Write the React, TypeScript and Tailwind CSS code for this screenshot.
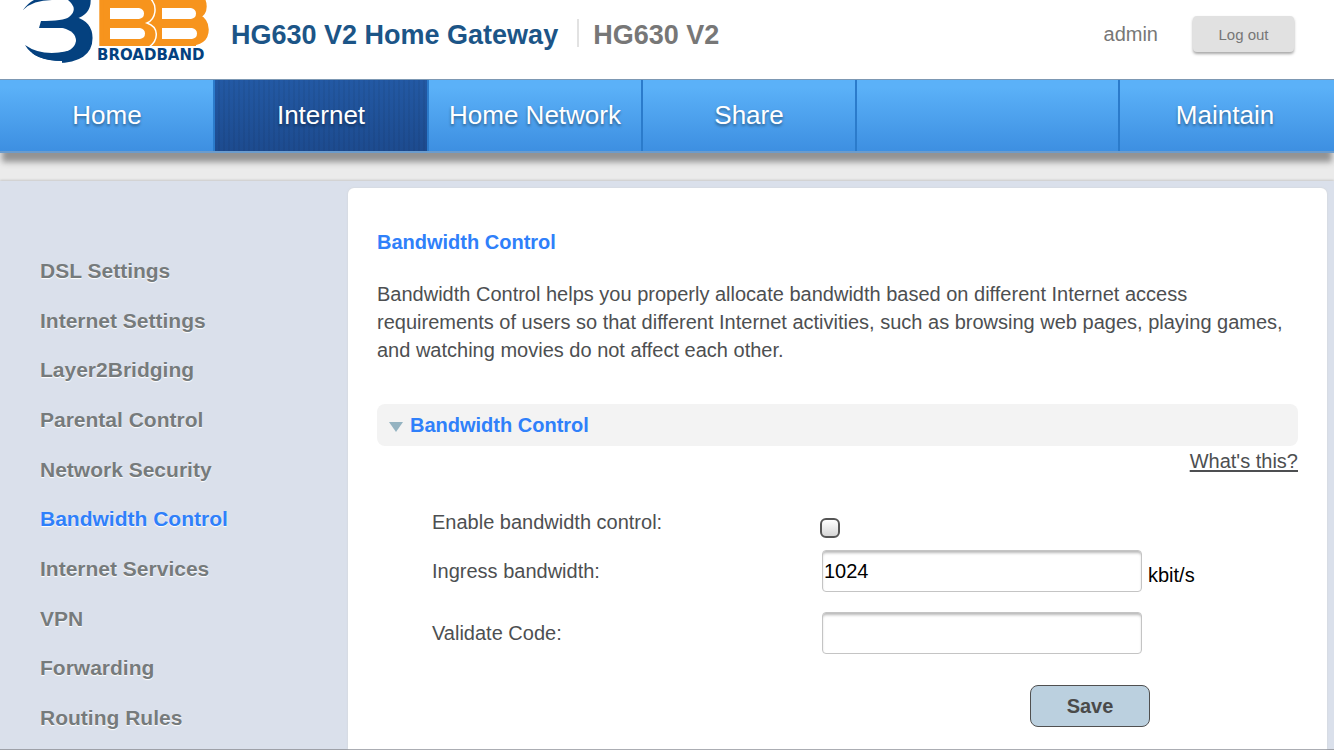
import { useState } from "react";

// ─── Constants ───────────────────────────────────────────────────────

const TABS = ["Home", "Internet", "Home Network", "Share"];

const MENU_ITEMS = [
  "DSL Settings",
  "Internet Settings",
  "Layer2Bridging",
  "Parental Control",
  "Network Security",
  "Bandwidth Control",
  "Internet Services",
  "VPN",
  "Forwarding",
  "Routing Rules",
];

const tabClass =
  "flex items-center justify-center border-[#2b7bcb] text-[26px] text-white [text-shadow:0_2px_3px_rgba(0,0,0,0.4)]";
const inputClass =
  "h-[42px] w-80 rounded border border-[#c4c4c4] bg-white px-px text-black shadow-[inset_0_3px_3px_-1px_#b8b8b8] outline-none";
const labelClass = "w-[390px] shrink-0";

// ─── Logo ────────────────────────────────────────────────────────────

function Logo() {
  return (
    <svg width="190" height="64" viewBox="0 0 190 64" role="img" aria-label="3BB Broadband" fontFamily="'DejaVu Sans', sans-serif" fontWeight="bold">
      <text x="3" y="60" fontSize="108" fill="#04417f" stroke="#04417f" strokeWidth="2">3</text>
      {/* open the bowls and taper the tails */}
      <path d="M0 0H46Q57 9 47 17Q42 21 18 21H0Z" fill="#fff" />
      <path d="M0 28H40Q54 31 54 41Q52 52 36 53H0Z" fill="#fff" />
      <path d="M0 40V64H40V61Q12 61 3 45Z" fill="#fff" />
      <path d="M1 10Q6 3 12 0H30Q11 0 1 10Z" fill="#04417f" />
      <path d="M3 45Q12 61 42 61L46 51Q20 57 3 45Z" fill="#04417f" />
      <path d="M19 21H48V28H17Z" fill="#04417f" />

      <text x="137" y="44" fontSize="69" fill="#f7941d" stroke="#f7941d" strokeWidth="4">B</text>
      <text x="73" y="44" fontSize="69" fill="#f7941d" stroke="#f7941d" strokeWidth="4">B</text>
      <path d="M84 0H174V46H84Z" fill="#f7941d" />
      {/* counters and the seam between the two letters */}
      <path d="M88 8H117Q122 9 122 13.500T117 19H88Z" fill="#fff" />
      <path d="M88 28H118Q123 29 123 33.500T118 39H88Z" fill="#fff" />
      <path d="M140 8H169Q174 9 174 13.500T169 19H140Z" fill="#fff" />
      <path d="M140 28H170Q175 29 175 33.500T170 39H140Z" fill="#fff" />
      <path d="M128 -2C136 6 134 19 125 23C137 27 137 40 127 47" fill="none" stroke="#fff" strokeWidth="1.500" />
      <text x="75" y="60" fontSize="15" fill="#04417f">BROADBAND</text>
    </svg>
  );
}

// ─── Page ────────────────────────────────────────────────────────────

export default function App() {
  const [tab, setTab] = useState("Internet");
  const [enabled, setEnabled] = useState(false);
  const [ingress, setIngress] = useState("1024");
  const [code, setCode] = useState("");

  return (
    <div className="flex min-h-screen flex-col border-b border-[#9b9fa6] bg-[#ebebeb] font-['Liberation_Sans',Arial,sans-serif] text-xl text-[#4d4f51]">
      {/* Header */}
      <header className="flex h-[79px] items-start bg-white pr-10 pl-[22px]">
        <Logo />
        <h1 className="mt-[19px] ml-[19px] text-[27px] leading-8 font-bold text-[#1c5587]">HG630 V2 Home Gateway</h1>
        <div className="mt-[19px] ml-[19px] h-7 border-l-2 border-[#e2e2e2] pl-[14px] text-[27px] leading-8 font-bold text-[#777]">
          HG630 V2
        </div>
        <div className="mt-4 ml-auto flex items-center gap-[35px] text-[#777]">
          <span>admin</span>
          <button
            type="button"
            className="h-9 w-[101px] rounded bg-[#e1e1e1] text-[15px] shadow-[0_2px_3px_rgba(0,0,0,0.35)]"
          >
            Log out
          </button>
        </div>
      </header>

      {/* Tabs */}
      <nav className="relative flex h-[74px] border-t border-b-2 border-t-[#7d98b3] border-b-[#6b9ccd] bg-linear-to-b from-[#5bb1f8] from-10% to-[#3d8fe1] pl-px shadow-[0_11px_6px_-2px_#939393]">
        {TABS.map((t) => (
          <button
            key={t}
            type="button"
            onClick={() => setTab(t)}
            className={`${tabClass} w-[214px] border-r-2 ${
              tab === t
                ? "bg-[repeating-linear-gradient(90deg,transparent_0_3px,rgba(0,0,0,0.05)_3px_5px),linear-gradient(#2359a4,#1d4b8f)]"
                : ""
            }`}
          >
            {t}
          </button>
        ))}
        <div className="flex-1 border-r-2 border-[#2b7bcb]" />
        <button type="button" onClick={() => setTab("Maintain")} className={`${tabClass} w-[214px] pr-1`}>
          Maintain
        </button>
      </nav>

      {/* Body */}
      <div className="mt-7 flex flex-1 bg-[#dae0eb] shadow-[0_-1px_2px_#c8c8c8]">
        <aside className="w-[348px] shrink-0">
          <ul className="flex h-full flex-col justify-between pt-[75px] pb-4 pl-10 text-[21px] leading-[30px] font-bold [text-shadow:0_1px_1px_#fff]">
            {MENU_ITEMS.map((item) => (
              <li key={item}>
                <a href="#" className={item === "Bandwidth Control" ? "text-[#2f80fa]" : "text-[#767b7c]"}>
                  {item}
                </a>
              </li>
            ))}
          </ul>
        </aside>

        <main className="mt-[7px] mr-[7px] flex-1 rounded-t-md bg-white px-[29px] pt-10 pb-[22px] shadow-[0_0_2px_#d0d0d0]">
          <h2 className="leading-7 font-bold text-[#2f80fa]">Bandwidth Control</h2>
          <p className="mt-6 leading-7">
            Bandwidth Control helps you properly allocate bandwidth based on different Internet access requirements of
            users so that different Internet activities, such as browsing web pages, playing games, and watching movies
            do not affect each other.
          </p>

          <section className="mt-10">
            <h3 className="flex h-[42px] items-center gap-[7px] rounded-lg bg-[#f3f3f3] pl-3 font-bold text-[#2f80fa]">
              <svg width="14" height="10" viewBox="0 0 14 10" className="mt-1">
                <path d="M0 0H14L7 10Z" fill="#94b3c1" />
              </svg>
              Bandwidth Control
            </h3>
            <div className="text-right leading-[30px]">
              <a href="#" className="underline underline-offset-2">What's this?</a>
            </div>

            <form className="pt-[30px] pl-[55px]" onSubmit={(e) => e.preventDefault()}>
              <div className="flex h-11 items-start">
                <label htmlFor="enable" className={`${labelClass} mt-0.5`}>Enable bandwidth control:</label>
                <input
                  id="enable"
                  type="checkbox"
                  checked={enabled}
                  onChange={(e) => setEnabled(e.target.checked)}
                  className="mt-3 -ml-0.5 size-5 appearance-none rounded-md border-2 border-[#555] bg-linear-to-b from-white to-[#d6d6d6] checked:from-[#2f80fa]"
                />
              </div>
              <div className="flex items-center">
                <label htmlFor="ingress" className={labelClass}>Ingress bandwidth:</label>
                <input id="ingress" type="text" value={ingress} onChange={(e) => setIngress(e.target.value)} className={inputClass} />
                <span className="mt-2 ml-1.5 text-black">kbit/s</span>
              </div>
              <div className="mt-5 flex items-center">
                <label htmlFor="code" className={labelClass}>Validate Code:</label>
                <input id="code" type="text" value={code} onChange={(e) => setCode(e.target.value)} className={inputClass} />
              </div>
              <button
                type="submit"
                className="mt-[31px] ml-[598px] block h-[42px] w-[120px] rounded-lg border border-[#505050] bg-[#bbd0df] font-bold text-[#4a4a4a]"
              >
                Save
              </button>
            </form>
          </section>
        </main>
      </div>
    </div>
  );
}
